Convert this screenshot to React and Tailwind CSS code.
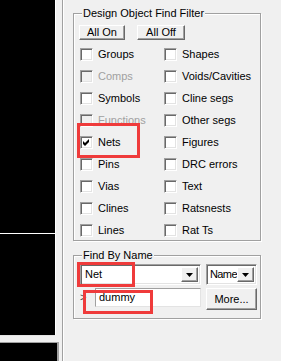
import React from "react";

function Check({ checked, disabled }) {
  return (
    <div
      className={`w-[13px] h-[13px] shrink-0 border border-t-[#a0a0a0] border-l-[#a0a0a0] border-r-white border-b-white shadow-[inset_1px_1px_0_#696969,inset_-1px_-1px_0_#e3e3e3] flex items-center justify-center ${
        disabled ? "bg-[#f0f0f0]" : "bg-white"
      }`}
    >
      {checked && (
        <svg width="7" height="7" viewBox="0 0 7 7">
          <path d="M0 2 L2 4 L6 0 L6 3 L2 7 L0 5 Z" fill="#000" />
        </svg>
      )}
    </div>
  );
}

function Item({ label, checked, disabled }) {
  return (
    <div className="flex items-center h-[13px] gap-[5px]">
      <Check checked={checked} disabled={disabled} />
      <span className={`leading-[13px] whitespace-nowrap ${disabled ? "text-[#a0a0a0]" : "text-black"}`}>{label}</span>
    </div>
  );
}

function Button({ children, className }) {
  return (
    <div
      className={`flex items-center justify-center bg-[#f0f0f0] border border-t-white border-l-white border-r-[#696969] border-b-[#696969] shadow-[inset_-1px_-1px_0_#a0a0a0] leading-none ${className}`}
    >
      {children}
    </div>
  );
}

function Arrow() {
  return (
    <div className="w-[17px] shrink-0 self-stretch bg-[#f0f0f0] border border-t-white border-l-white border-r-[#696969] border-b-[#696969] shadow-[inset_-1px_-1px_0_#a0a0a0] flex items-center justify-center">
      <svg width="7" height="4" viewBox="0 0 7 4">
        <path d="M0 0 L7 0 L3.5 4 Z" fill="#000" />
      </svg>
    </div>
  );
}

function Combo({ text, className, textClass = "" }) {
  return (
    <div
      className={`flex h-[21px] bg-white border border-t-[#a0a0a0] border-l-[#a0a0a0] border-r-white border-b-white shadow-[inset_1px_1px_0_#696969,inset_-1px_-1px_0_#e3e3e3] p-[2px] ${className}`}
    >
      <div className={`flex-1 min-w-0 flex items-center leading-none whitespace-nowrap ${textClass}`}>{text}</div>
      <Arrow />
    </div>
  );
}

function Group({ title, className, children }) {
  return (
    <div
      className={`relative border border-[#a0a0a0] shadow-[inset_1px_1px_0_#fff,1px_1px_0_#fff] ${className}`}
    >
      <span className="absolute left-[8px] top-[-7px] px-[1px] bg-[#f0f0f0] leading-[13px] whitespace-nowrap">
        {title}
      </span>
      {children}
    </div>
  );
}

export default function App() {
  const left = [
    ["Groups"],
    ["Comps", false, true],
    ["Symbols"],
    ["Functions", false, true],
    ["Nets", true],
    ["Pins"],
    ["Vias"],
    ["Clines"],
    ["Lines"],
  ];
  const right = [
    ["Shapes"],
    ["Voids/Cavities"],
    ["Cline segs"],
    ["Other segs"],
    ["Figures"],
    ["DRC errors"],
    ["Text"],
    ["Ratsnests"],
    ["Rat Ts"],
  ];
  return (
    <div className="relative w-[281px] h-[361px] bg-[#f0f0f0] flex overflow-hidden font-['Liberation_Sans',Arial,sans-serif] text-[11px] text-black">
      {/* left black panes */}
      <div className="w-[59px] shrink-0 flex flex-col">
        <div className="w-[56px] h-[233px] bg-black border-r border-white" />
        <div className="w-[56px] h-px bg-white" />
        <div className="w-[56px] h-[102px] bg-black border-r border-white border-b border-b-[#e3e3e3]" />
        <div className="h-[6px]" />
        <div className="flex-1 bg-black border-t border-r-2 border-t-[#a0a0a0] border-r-[#a0a0a0]" />
      </div>
      <div className="w-[3px] shrink-0" />
      <div className="w-px shrink-0 bg-[#a0a0a0]" />
      <div className="w-px shrink-0 bg-white" />

      {/* right panel */}
      <div className="flex flex-col pl-[9px] pt-[13px]">
        <Group title="Design Object Find Filter" className="w-[188px] h-[228px] pl-[5px] pt-[11px]">
          <div className="flex gap-[12px]">
            <Button className="w-[46px] h-[15px]">All On</Button>
            <Button className="w-[48px] h-[15px]">All Off</Button>
          </div>
          <div className="flex mt-[8px] pl-[1px]">
            <div className="w-[84px] flex flex-col gap-[9px]">
              {left.map(([l, c, d]) => (
                <Item key={l} label={l} checked={c} disabled={d} />
              ))}
            </div>
            <div className="flex flex-col gap-[9px]">
              {right.map(([l, c, d]) => (
                <Item key={l} label={l} checked={c} disabled={d} />
              ))}
            </div>
          </div>
        </Group>

        <Group title="Find By Name" className="mt-[14px] w-[188px] h-[64px] pl-[6px] pt-[8px]">
          <div className="flex gap-[5px]">
            <Combo text="Net" className="w-[121px]" textClass="pl-[2px]" />
            <Combo text="Name" className="w-[51px]" textClass="pl-[1px] tracking-[-0.6px]" />
          </div>
          <div className="flex mt-[3px] items-start">
            <div className="w-[15px] h-[19px] flex items-center leading-none text-[#404040]">&gt;</div>
            <div className="w-[106px] h-[19px] bg-white border border-t-[#a0a0a0] border-l-[#a0a0a0] border-r-[#e3e3e3] border-b-[#e3e3e3] flex items-center pl-[3px] leading-none">
              dummy
            </div>
            <Button className="ml-[5px] w-[51px] h-[22px]">More...</Button>
          </div>
        </Group>
      </div>

      {/* red annotation boxes */}
      <div className="absolute left-[77px] top-[123px] w-[63px] h-[35px] border-[3px] border-[#ef3b3b]" />
      <div className="absolute left-[77px] top-[262px] w-[58px] h-[25px] border-[3px] border-[#ef3b3b]" />
      <div className="absolute left-[83px] top-[290px] w-[70px] h-[24px] border-[3px] border-[#ef3b3b]" />
    </div>
  );
}
